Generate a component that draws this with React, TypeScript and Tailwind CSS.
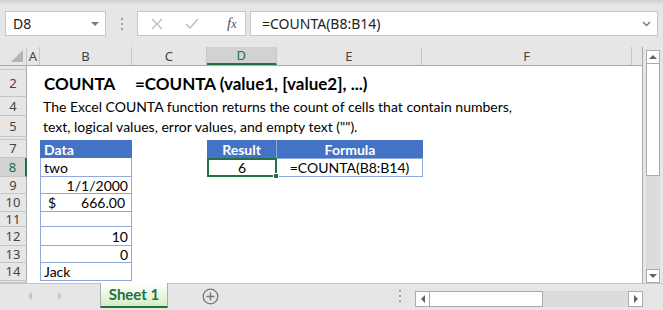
import React from "react";

type Row = { n: string; h: number; sel?: boolean };

const rows: Row[] = [
  { n: "1", h: 4 },
  { n: "2", h: 27 },
  { n: "4", h: 19 },
  { n: "5", h: 21 },
  { n: "6", h: 3 },
  { n: "7", h: 18 },
  { n: "8", h: 19, sel: true },
  { n: "9", h: 17 },
  { n: "10", h: 18 },
  { n: "11", h: 15 },
  { n: "12", h: 19 },
  { n: "13", h: 17 },
  { n: "14", h: 18 },
  { n: "15", h: 2 },
];

const cols = [
  { l: "A", w: "w-[13px]" },
  { l: "B", w: "w-[92px]" },
  { l: "C", w: "w-[75px]" },
  { l: "D", w: "w-[70px]" },
  { l: "E", w: "w-[146px]" },
  { l: "F", w: "w-[210px]" },
  { l: "", w: "w-[10px]" },
];

const cellFont = "font-['Lato',sans-serif] text-[14px] text-black";

const DataCell = ({ n }: { n: string }) => {
  const base =
    "w-[92px] h-full border-x border-b border-[#8eaadb] flex items-center px-[3px] whitespace-nowrap";
  if (n === "7")
    return (
      <div className={`${base} border-t bg-[#4472c4] border-[#4472c4] text-white font-bold`}>
        Data
      </div>
    );
  if (n === "8") return <div className={base}>two</div>;
  if (n === "9") return <div className={`${base} justify-end`}>1/1/2000</div>;
  if (n === "10")
    return (
      <div className={`${base} justify-between pl-[7px] pr-[6px]`}>
        <span>$</span>
        <span>666.00</span>
      </div>
    );
  if (n === "11") return <div className={base}></div>;
  if (n === "12") return <div className={`${base} justify-end`}>10</div>;
  if (n === "13") return <div className={`${base} justify-end`}>0</div>;
  if (n === "14") return <div className={base}>Jack</div>;
  return <div className="w-[92px] h-full"></div>;
};

const RowContent = ({ n }: { n: string }) => {
  if (n === "2")
    return (
      <div className="flex items-center h-full pl-[17px] font-['Lato',sans-serif] text-[17px] font-bold text-black whitespace-nowrap">
        <span className="w-[91px]">COUNTA</span>
        <span>=COUNTA (value1, [value2], ...)</span>
      </div>
    );
  if (n === "4")
    return (
      <div className={`flex items-center h-full pl-[16px] whitespace-nowrap ${cellFont}`}>
        The Excel COUNTA function returns the count of cells that contain numbers,
      </div>
    );
  if (n === "5")
    return (
      <div className={`flex items-center h-full pl-[16px] whitespace-nowrap ${cellFont}`}>
        text, logical values, error values, and empty text ("").
      </div>
    );
  const inTable = Number(n) >= 7 && Number(n) <= 14;
  return (
    <div className={`flex h-full ${cellFont}`}>
      <div className="w-[13px]"></div>
      {inTable ? <DataCell n={n} /> : <div className="w-[92px]"></div>}
      <div className="w-[75px]"></div>
      {n === "7" && (
        <>
          <div className="w-[70px] h-full bg-[#4472c4] text-white font-bold flex items-center justify-center border-r border-[#8eaadb]">
            Result
          </div>
          <div className="w-[146px] h-full bg-[#4472c4] text-white font-bold flex items-center justify-center">
            Formula
          </div>
        </>
      )}
      {n === "8" && (
        <>
          <div className="relative w-[70px] h-full border-2 border-[#217346] flex items-center justify-center">
            6
            <div className="absolute right-[-4px] bottom-[-4px] w-[6px] h-[6px] bg-[#217346] border border-white"></div>
          </div>
          <div className="w-[146px] h-full border-y border-r border-[#8eaadb] flex items-center justify-center">
            =COUNTA(B8:B14)
          </div>
        </>
      )}
    </div>
  );
};

const Tri = ({ d, c = "#777" }: { d: string; c?: string }) => (
  <svg width="8" height="8" viewBox="0 0 8 8">
    <path d={d} fill={c} />
  </svg>
);

export default function App() {
  return (
    <div className="w-[663px] h-[310px] bg-[#e6e6e6] flex flex-col overflow-hidden font-['Noto_Sans',sans-serif]">
      {/* formula bar */}
      <div className="h-[5px] bg-gradient-to-b from-[#cfcfcf] to-[#e6e6e6]"></div>
      <div className="h-[42px] flex items-start pt-[6px] pl-[5px]">
        <div className="w-[101px] h-[25px] bg-white border border-[#c6c6c6] flex items-center justify-between pl-[7px] pr-[6px] text-[14px] text-[#222]">
          <span>D8</span>
          <Tri d="M0 2h8L4 6z" c="#7a7a7a" />
        </div>
        <div className="w-[31px] h-[25px] flex flex-col items-center justify-center gap-[3px]">
          <span className="w-[2px] h-[2px] bg-[#a0a0a0]"></span>
          <span className="w-[2px] h-[2px] bg-[#a0a0a0]"></span>
          <span className="w-[2px] h-[2px] bg-[#a0a0a0]"></span>
        </div>
        <div className="w-[109px] h-[25px] bg-white border border-[#c6c6c6] flex items-center pl-[13px] gap-[22px]">
          <svg width="12" height="12" viewBox="0 0 12 12">
            <path d="M1 1L11 11M11 1L1 11" stroke="#b9b9b9" strokeWidth="1.3" />
          </svg>
          <svg width="14" height="12" viewBox="0 0 14 12">
            <path d="M1 6l4 4L13 1" stroke="#b9b9b9" strokeWidth="1.4" fill="none" />
          </svg>
          <span className="font-['Liberation_Serif',serif] italic text-[15px] text-[#555] ml-[6px]">
            f<span className="text-[12px]">x</span>
          </span>
        </div>
        <div className="ml-[4px] w-[408px] h-[25px] bg-white border border-[#c6c6c6] flex items-center justify-between pl-[11px] pr-[6px] text-[14px] text-[#222]">
          <span>=COUNTA(B8:B14)</span>
          <svg width="9" height="6" viewBox="0 0 9 6">
            <path d="M1 1l3.5 3.5L8 1" stroke="#777" strokeWidth="1.4" fill="none" />
          </svg>
        </div>
      </div>

      {/* grid + vertical scrollbar */}
      <div className="flex h-[236px]">
        <div className="w-[643px] flex flex-col border-r border-[#ababab]">
          {/* column headers */}
          <div className="flex h-[19px] border-b border-[#ababab] text-[13px] leading-none text-[#444]">
            <div className="w-[27px] h-full flex items-end justify-end pr-[3px] pb-[3px] border-r border-[#c6c6c6]">
              <svg width="12" height="12" viewBox="0 0 12 12">
                <path d="M12 0V12H0z" fill="#b4b4b4" />
              </svg>
            </div>
            {cols.map((c, i) => (
              <div
                key={i}
                className={`${c.w} h-full flex items-center justify-center ${
                  i < cols.length - 1 ? "border-r border-[#c6c6c6]" : ""
                } ${c.l === "D" ? "bg-[#d2d2d2] text-[#217346] border-b-2 border-b-[#217346]" : ""}`}
              >
                {c.l}
              </div>
            ))}
          </div>
          {/* rows */}
          {rows.map((r) => (
            <div key={r.n} className="flex" style={{ height: r.h }}>
              <div
                className={`w-[27px] h-full shrink-0 flex items-center justify-center overflow-hidden border-b border-[#c6c6c6] text-[13px] leading-none ${
                  r.sel
                    ? "bg-[#d2d2d2] text-[#217346] border-r-2 border-r-[#217346]"
                    : "text-[#444] border-r border-r-[#ababab]"
                }`}
              >
                {r.h > 10 ? r.n : ""}
              </div>
              <div className="flex-1 h-full bg-white">
                <RowContent n={r.n} />
              </div>
            </div>
          ))}
        </div>
        <div className="ml-[3px] mt-[3px] w-[14px] h-[233px] flex flex-col">
          <div className="h-[14px] bg-white border border-[#ababab] flex items-center justify-center">
            <Tri d="M0 6h8L4 2z" c="#606060" />
          </div>
          <div className="h-[112px] bg-white border-x border-b border-[#ababab]"></div>
          <div className="flex-1 bg-[#dcdcdc]"></div>
          <div className="h-[14px] bg-white border border-[#ababab] flex items-center justify-center">
            <Tri d="M0 2h8L4 6z" c="#606060" />
          </div>
        </div>
      </div>

      {/* sheet tabs */}
      <div className="flex-1 flex items-start border-t border-[#c6c6c6]">
        <div className="w-[100px] h-[24px] flex items-center pl-[26px] gap-[22px]">
          <Tri d="M6 0v8L2 4z" c="#c4c4c4" />
          <Tri d="M2 0v8L6 4z" c="#c4c4c4" />
        </div>
        <div className="w-[68px] h-[25px] mt-[-1px] bg-gradient-to-b from-white to-[#d6ecc6] border-x border-[#ababab] border-b-2 border-b-[#217346] flex items-center justify-center font-['Lato',sans-serif] font-bold text-[15px] text-[#217346]">
          Sheet 1
        </div>
        <div className="w-[84px] h-[24px] flex items-center justify-center">
          <svg width="17" height="17" viewBox="0 0 17 17">
            <circle cx="8.5" cy="8.5" r="7.3" stroke="#777" strokeWidth="1.3" fill="none" />
            <path d="M8.5 4.5v8M4.5 8.5h8" stroke="#777" strokeWidth="1.4" />
          </svg>
        </div>
        <div className="w-[132px]"></div>
        <div className="w-[31px] h-[24px] flex flex-col items-center justify-center gap-[3px]">
          <span className="w-[2px] h-[2px] bg-[#a0a0a0]"></span>
          <span className="w-[2px] h-[2px] bg-[#a0a0a0]"></span>
          <span className="w-[2px] h-[2px] bg-[#a0a0a0]"></span>
        </div>
        <div className="mt-[7px] w-[228px] h-[16px] flex">
          <div className="w-[15px] h-full bg-white border border-[#ababab] flex items-center justify-center">
            <Tri d="M6 0v8L2 4z" c="#606060" />
          </div>
          <div className="w-[113px] h-full bg-white border-y border-r border-[#ababab]"></div>
          <div className="flex-1 h-full bg-[#dcdcdc]"></div>
          <div className="w-[15px] h-full bg-white border border-[#ababab] flex items-center justify-center">
            <Tri d="M2 0v8L6 4z" c="#606060" />
          </div>
        </div>
      </div>
    </div>
  );
}
